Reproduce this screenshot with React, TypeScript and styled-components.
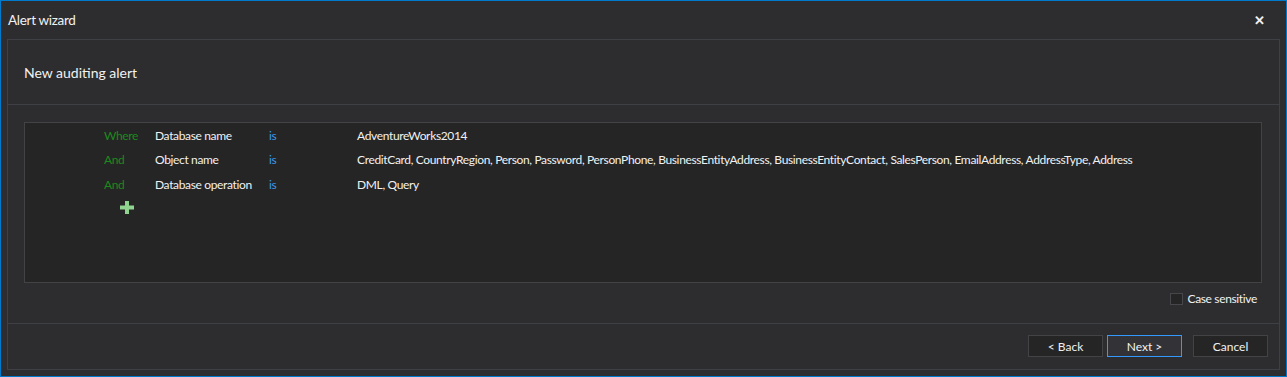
import React from "react";
import styled, { createGlobalStyle } from "styled-components";

const Global = createGlobalStyle`
  html, body { margin: 0; padding: 0; background: #2d2d30; }
  body { font-family: "Segoe UI", Lato, "Open Sans", sans-serif; }
`;

const Window = styled.div`
  width: 1287px;
  height: 377px;
  box-sizing: border-box;
  border: 1px solid #007acc;
  background: #2d2d30;
  color: #f1f1f1;
  display: flex;
  flex-direction: column;
`;

const TitleBar = styled.div`
  height: 38px;
  display: flex;
  align-items: center;
  justify-content: space-between;
  padding: 0 21px 0 7px;
  font-size: 13.5px;
  letter-spacing: -0.3px;
`;

const Close = styled.span`
  font-size: 13px;
  font-weight: bold;
`;

const Panel = styled.div`
  flex: 1;
  margin: 0 6px 6px 6px;
  border: 1px solid #3f3f46;
  display: flex;
  flex-direction: column;
`;

const Header = styled.div`
  height: 64px;
  display: flex;
  align-items: center;
  padding-left: 16px;
  font-size: 14px;
  border-bottom: 1px solid #3f3f46;
`;

const Body = styled.div`
  padding: 17px 17px 0 16px;
  display: flex;
  flex-direction: column;
`;

const Conditions = styled.div`
  height: 161px;
  box-sizing: border-box;
  background: #252526;
  border: 1px solid #434346;
  padding: 0 0 0 79px;
  font-size: 12px;
  letter-spacing: -0.35px;
`;

const Row = styled.div`
  display: grid;
  grid-template-columns: 51px 114px 88px 1fr;
  height: 24.5px;
  align-items: center;
`;

const Conj = styled.span`
  color: #1c8a1c;
`;

const Op = styled.span`
  color: #3c9ae8;
`;

const Add = styled.div`
  padding: 1px 0 0 16px;
  height: 20px;
  display: flex;
  align-items: center;
`;

const Options = styled.div`
  display: flex;
  justify-content: flex-end;
  align-items: center;
  gap: 4px;
  height: 31px;
  padding-right: 5px;
  font-size: 12px;
  letter-spacing: -0.35px;
`;

const Box = styled.span`
  width: 11px;
  height: 10px;
  border: 1px solid #46464b;
  background: #252526;
`;

const Footer = styled.div`
  margin-top: 9px;
  border-top: 1px solid #3f3f46;
  flex: 1;
  display: flex;
  justify-content: flex-end;
  align-items: flex-start;
  padding: 11px 11px 0 0;
  gap: 4px;
`;

const Button = styled.button<{ $primary?: boolean; $gap?: number }>`
  width: 75px;
  height: 22px;
  box-sizing: border-box;
  margin-left: ${(p) => p.$gap ?? 0}px;
  background: ${(p) => (p.$primary ? "#333337" : "#252526")};
  border: 1px solid ${(p) => (p.$primary ? "#3399ff" : "#434346")};
  color: #f1f1f1;
  font-family: inherit;
  font-size: 12px;
  padding: 0;
`;

const rows = [
  ["Where", "Database name", "AdventureWorks2014"],
  [
    "And",
    "Object name",
    "CreditCard, CountryRegion, Person, Password, PersonPhone, BusinessEntityAddress, BusinessEntityContact, SalesPerson, EmailAddress, AddressType, Address",
  ],
  ["And", "Database operation", "DML, Query"],
];

export default function App() {
  return (
    <>
      <Global />
      <Window>
        <TitleBar>
          <span>Alert wizard</span>
          <Close>✕</Close>
        </TitleBar>
        <Panel>
          <Header>New auditing alert</Header>
          <Body>
            <Conditions>
              {rows.map(([c, f, v], i) => (
                <Row key={i}>
                  <Conj>{c}</Conj>
                  <span>{f}</span>
                  <Op>is</Op>
                  <span>{v}</span>
                </Row>
              ))}
              <Add>
                <svg width="14" height="13" viewBox="0 0 14 13">
                  <path d="M5 0h4v4.5h5v4H9V13H5V8.5H0v-4h5z" fill="#8fd48f" />
                </svg>
              </Add>
            </Conditions>
            <Options>
              <Box />
              <span>Case sensitive</span>
            </Options>
          </Body>
          <Footer>
            <Button>&lt; Back</Button>
            <Button $primary>Next &gt;</Button>
            <Button $gap={7}>Cancel</Button>
          </Footer>
        </Panel>
      </Window>
    </>
  );
}
